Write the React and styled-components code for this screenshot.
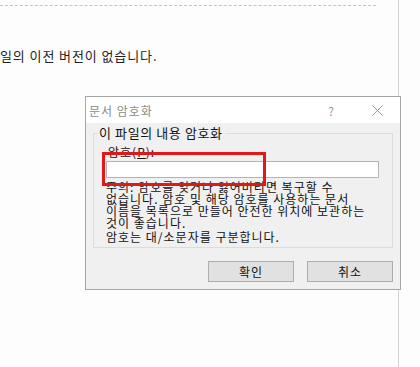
import React from 'react';
import styled, { createGlobalStyle } from 'styled-components';

const GlobalStyle = createGlobalStyle`
  html, body {
    margin: 0;
    padding: 0;
    background: #fdfdfd;
    font-family: "Noto Sans CJK KR", "Noto Sans", sans-serif;
  }
`;

const Screen = styled.div`
  position: relative;
  width: 420px;
  height: 367px;
  overflow: hidden;
  background: #fdfdfd;
`;

const DocPage = styled.div`
  width: 399px;
  height: 367px;
  border-right: 1px solid #d2d2d2;
  padding-top: 5px;
  box-sizing: border-box;
`;

const DashedRule = styled.div`
  width: 376px;
  border-top: 1px dashed #c4c4c4;
`;

const DocText = styled.p`
  margin: 41px 0 0 0;
  font-size: 13px;
  line-height: 18px;
  letter-spacing: 0.9px;
  color: #1e1e1e;
  white-space: nowrap;
`;

const Dialog = styled.div`
  position: absolute;
  left: 85px;
  top: 96px;
  width: 316px;
  height: 194px;
  box-sizing: border-box;
  border: 1px solid #a6a6a6;
  background: #f0f0f0;
  display: flex;
  flex-direction: column;
`;

const TitleBar = styled.div`
  height: 26px;
  background: #ffffff;
  display: flex;
  align-items: center;
`;

const Title = styled.span`
  flex: 1;
  padding-left: 3px;
  font-size: 12px;
  letter-spacing: 1px;
  color: #8a8a8a;
`;

const CaptionButton = styled.span`
  width: 46px;
  height: 26px;
  display: flex;
  align-items: center;
  justify-content: center;
  font-size: 12px;
  color: #9a9a9a;
`;

const Body = styled.div`
  flex: 1;
  padding: 2px 7px 0 7px;
  display: flex;
  flex-direction: column;
`;

const Group = styled.fieldset`
  margin: 0;
  padding: 0 0 4px 0;
  border: 1px solid #dcdcdc;
  min-width: 0;
`;

const Legend = styled.legend`
  margin-left: 3px;
  padding: 0 2px;
  font-size: 13px;
  line-height: 16px;
  letter-spacing: 0.6px;
  color: #111;
`;

const FieldLabel = styled.div`
  margin: 4px 0 0 14px;
  font-size: 12px;
  line-height: 14px;
  letter-spacing: 1px;
  color: #111;
  u {
    text-decoration: underline;
  }
`;

const PasswordInput = styled.input`
  display: block;
  margin: 2px 0 0 12px;
  width: 273px;
  height: 17px;
  box-sizing: border-box;
  border: 1px solid #b4b4b4;
  background: #fff;
  outline: none;
`;

const Note = styled.div`
  margin: 3px 0 0 12px;
  font-size: 12px;
  line-height: 12px;
  letter-spacing: 1px;
  color: #111;
  white-space: nowrap;
`;

const NoteLine = styled.div`
  margin-top: ${p => (p.$gap ? '2px' : '0')};
`;

const Highlight = styled.div`
  position: absolute;
  left: 16px;
  top: 55px;
  width: 164px;
  height: 34px;
  box-sizing: border-box;
  border: 3px solid #e3161c;
  pointer-events: none;
`;

const ButtonRow = styled.div`
  display: flex;
  justify-content: flex-end;
  gap: 13px;
  margin-top: 13px;
`;

const Button = styled.button`
  width: 86px;
  height: 21px;
  box-sizing: border-box;
  border: 1px solid #adadad;
  background: #e1e1e1;
  font-family: inherit;
  font-size: 12px;
  line-height: 17px;
  letter-spacing: 1px;
  color: #111;
  padding: 0;
`;

const CloseIcon = () => (
  <svg width="11" height="11" viewBox="0 0 11 11">
    <path d="M0.5 0.5 L10.5 10.5 M10.5 0.5 L0.5 10.5" stroke="#9a9a9a" strokeWidth="1" fill="none" />
  </svg>
);

const App = () => (
  <Screen>
    <GlobalStyle />
    <DocPage>
      <DashedRule />
      <DocText>일의 이전 버전이 없습니다.</DocText>
    </DocPage>
    <Dialog>
      <TitleBar>
        <Title>문서 암호화</Title>
        <CaptionButton>?</CaptionButton>
        <CaptionButton>
          <CloseIcon />
        </CaptionButton>
      </TitleBar>
      <Body>
        <Group>
          <Legend>이 파일의 내용 암호화</Legend>
          <FieldLabel>
            암호(<u>P</u>):
          </FieldLabel>
          <PasswordInput type="password" />
          <Note>
            <NoteLine>주의: 암호를 잊거나 잃어버리면 복구할 수</NoteLine>
            <NoteLine>없습니다. 암호 및 해당 암호를 사용하는 문서</NoteLine>
            <NoteLine>이름을 목록으로 만들어 안전한 위치에 보관하는</NoteLine>
            <NoteLine>것이 좋습니다.</NoteLine>
            <NoteLine $gap>암호는 대/소문자를 구분합니다.</NoteLine>
          </Note>
        </Group>
        <ButtonRow>
          <Button>확인</Button>
          <Button>취소</Button>
        </ButtonRow>
      </Body>
      <Highlight />
    </Dialog>
  </Screen>
);

export default App;
